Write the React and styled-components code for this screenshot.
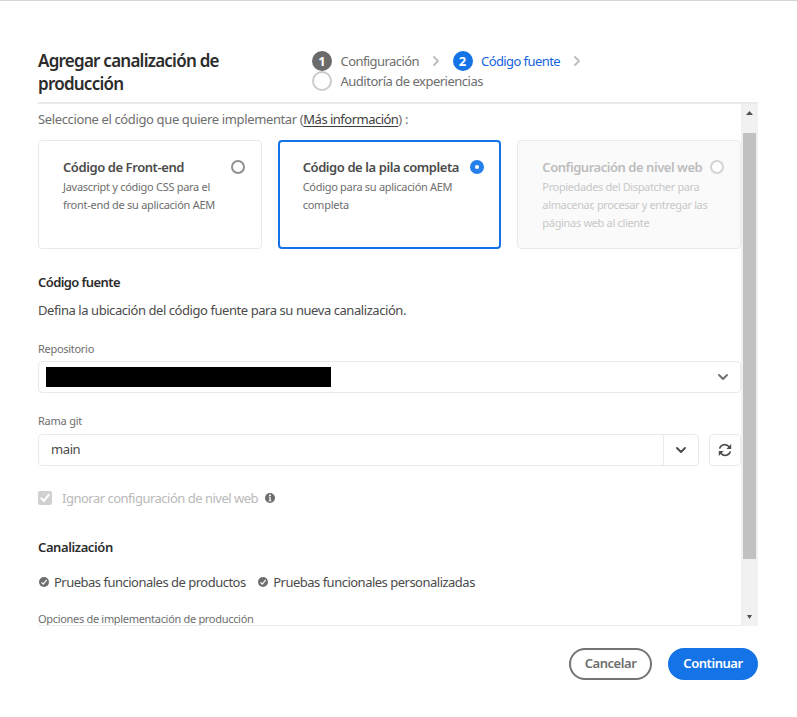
import React from "react";
import styled, { createGlobalStyle } from "styled-components";

const GlobalStyle = createGlobalStyle`
  *, *::before, *::after { box-sizing: border-box; }
  body {
    margin: 0;
    background: #fff;
    color: #4b4b4b;
    font-family: "Noto Sans", "Open Sans", sans-serif;
    font-size: 13px;
  }
  button { font-family: inherit; cursor: pointer; }
`;

const Dialog = styled.main`
  width: 797px;
  height: 717px;
  padding: 0 39px 0 38px;
  border-top: 1px solid #d5d5d5;
  background: #fff;
  display: flex;
  flex-direction: column;
  overflow: hidden;
`;

const Header = styled.header`
  height: 103px;
  flex: none;
  display: flex;
  border-bottom: 2px solid #eaeaea;
`;

const Title = styled.h1`
  width: 274px;
  margin: 0;
  padding: 48px 60px 0 0;
  font-size: 17px;
  font-weight: 600;
  line-height: 23px;
  letter-spacing: -0.76px;
  color: #2c2c2c;
`;

const Steps = styled.ol`
  list-style: none;
  margin: 0;
  padding: 50px 0 0;
  display: flex;
  flex-wrap: wrap;
  align-content: flex-start;
  width: 300px;
`;

const Step = styled.li`
  display: flex;
  align-items: center;
  height: 20px;
  color: ${(p) => (p.$active ? "#1463e0" : "#6e6e6e")};
  letter-spacing: ${(p) => p.$ls}px;
`;

const StepMarker = styled.span`
  width: 20px;
  height: 20px;
  flex: none;
  margin-right: 8.5px;
  border-radius: 50%;
  display: grid;
  place-items: center;
  color: #fff;
  font-size: 13px;
  font-weight: 700;
  line-height: 20px;
  letter-spacing: 0;
  background: ${(p) => (p.$state === "active" ? "#1473e6" : p.$state === "done" ? "#6b6b6b" : "#fff")};
  border: ${(p) => (p.$state === "todo" ? "2px solid #cacaca" : "none")};
`;

const StepArrow = styled.svg`
  width: 8px;
  height: 12px;
  margin: 0 13px 0 12.5px;
`;

const Body = styled.section`
  height: 522px;
  flex: none;
  display: flex;
`;

const Content = styled.div`
  width: 703px;
  overflow: hidden;
  border-bottom: 1px solid #ececec;
`;

const ScrollTrack = styled.div`
  width: 17px;
  display: flex;
  flex-direction: column;
  align-items: center;
  background: #f1f1f1;
`;

const ScrollArrow = styled.svg`
  width: 17px;
  height: 17px;
  flex: none;
`;

const ScrollThumb = styled.div`
  width: 13px;
  height: 426px;
  margin: 12px 0 auto;
  background: #c1c1c1;
`;

const Intro = styled.p`
  margin: 0;
  height: 36px;
  padding-top: 5px;
  line-height: 20px;
  letter-spacing: -0.37px;
  color: #6e6e6e;
  white-space: pre;
`;

const MoreLink = styled.a`
  color: #3f3f3f;
  letter-spacing: -0.515px;
  text-decoration: underline;
  text-underline-offset: 2px;
`;

const Cards = styled.div`
  display: flex;
  gap: 16px;
`;

const Card = styled.label`
  flex: 1 1 0;
  min-width: 0;
  height: 109px;
  display: flex;
  flex-direction: column;
  padding: ${(p) => (p.$selected ? "16px 15px 0 23px" : "17px 16px 0 24px")};
  border: ${(p) => (p.$selected ? "2px solid #1473e6" : "1px solid #eaeaea")};
  border-radius: 4px;
  background: ${(p) => (p.$disabled ? "#fafafa" : "#fff")};
  color: ${(p) => (p.$disabled ? "#c8c8c8" : "#6e6e6e")};
`;

const CardTop = styled.span`
  display: flex;
  align-items: flex-start;
  justify-content: space-between;
  height: 20px;
`;

const CardTitle = styled.strong`
  font-weight: 600;
  line-height: 19px;
  letter-spacing: ${(p) => p.$ls}px;
  color: ${(p) => (p.$disabled ? "#bdbdbd" : "#4b4b4b")};
  white-space: nowrap;
`;

const Radio = styled.span`
  width: 14px;
  height: 14px;
  flex: none;
  margin-top: 2px;
  border-radius: 50%;
  background: #fff;
  border: ${(p) => (p.$selected ? "5px solid #2680eb" : p.$disabled ? "2px solid #d3d3d3" : "2px solid #909090")};
`;

const CardLine = styled.span`
  font-size: 11px;
  line-height: 18px;
  letter-spacing: ${(p) => p.$ls}px;
  white-space: nowrap;
`;

const SectionTitle = styled.h2`
  margin: ${(p) => p.$top}px 0 0;
  font-size: 13px;
  font-weight: 600;
  line-height: 20px;
  letter-spacing: ${(p) => p.$ls}px;
  color: #2c2c2c;
`;

const Paragraph = styled.p`
  margin: 8px 0 0;
  line-height: 20px;
  letter-spacing: -0.435px;
`;

const FieldLabel = styled.div`
  margin-top: ${(p) => p.$top}px;
  height: ${(p) => p.$height || 22}px;
  font-size: 11px;
  line-height: 20px;
  letter-spacing: ${(p) => p.$ls}px;
  color: #6e6e6e;
`;

const Picker = styled.div`
  height: 32px;
  display: flex;
  align-items: center;
  justify-content: space-between;
  padding: 0 11px 0 7px;
  border: 1px solid #eaeaea;
  border-radius: 4px;
`;

const Redacted = styled.span`
  width: 285px;
  height: 20px;
  background: #000;
`;

const BranchRow = styled.div`
  display: flex;
  gap: 10px;
  height: 32px;
`;

const Combo = styled.div`
  flex: 1;
  display: flex;
  border: 1px solid #eaeaea;
  border-radius: 4px;
`;

const ComboValue = styled.span`
  flex: 1;
  padding-left: 12px;
  line-height: 29px;
  letter-spacing: -0.4px;
`;

const ComboButton = styled.button`
  width: 35px;
  padding: 0 1px 0 0;
  border: 0;
  border-left: 1px solid #eaeaea;
  background: transparent;
  display: grid;
  place-items: center;
`;

const RefreshButton = styled.button`
  width: 32px;
  padding: 0;
  border: 1px solid #eaeaea;
  border-radius: 4px;
  background: #fff;
  display: grid;
  place-items: center;
`;

const CheckRow = styled.div`
  display: flex;
  align-items: center;
  height: 20px;
  margin-top: 22px;
  color: #b9b9b9;
  letter-spacing: -0.5px;
`;

const CheckBox = styled.span`
  width: 14px;
  height: 14px;
  margin-right: 10px;
  border-radius: 2px;
  background: #d0d0d0;
  display: grid;
  place-items: center;
`;

const InfoIcon = styled.svg`
  width: 10px;
  height: 10px;
  margin-left: 6.5px;
`;

const Tests = styled.div`
  display: flex;
  gap: 12.5px;
  height: 20px;
  margin-top: 15px;
  padding-left: 1px;
`;

const Test = styled.span`
  display: flex;
  align-items: center;
  gap: 5px;
  letter-spacing: -0.505px;
`;

const Footer = styled.footer`
  display: flex;
  justify-content: flex-end;
  gap: 16px;
  margin-top: 22px;
`;

const ActionButton = styled.button`
  width: ${(p) => (p.$primary ? 90 : 83)}px;
  height: 32px;
  padding: 0 0 2px;
  border-radius: 16px;
  border: 2px solid ${(p) => (p.$primary ? "#1473e6" : "#747474")};
  background: ${(p) => (p.$primary ? "#1473e6" : "#fff")};
  color: ${(p) => (p.$primary ? "#fff" : "#6e6e6e")};
  font-size: 13px;
  font-weight: 600;
  line-height: 18px;
  letter-spacing: -0.45px;
`;

const Arrow = () => (
  <StepArrow viewBox="0 0 8 12">
    <path d="M2 2l4 4-4 4" fill="none" stroke="#bcbcbc" strokeWidth="1.8" strokeLinecap="round" strokeLinejoin="round" />
  </StepArrow>
);

const ChevronDown = ({ color }) => (
  <svg width="12" height="8" viewBox="0 0 12 8">
    <path d="M2 2l4 4 4-4" fill="none" stroke={color} strokeWidth="1.9" strokeLinecap="round" strokeLinejoin="round" />
  </svg>
);

const RefreshIcon = () => (
  <svg width="14" height="14" viewBox="0 0 14 14">
    <g fill="none" stroke="#4b4b4b" strokeWidth="1.6">
      <path d="M1.6 5.6A5.3 5.3 0 0 1 11 3.8" />
      <path d="M12.4 8.4A5.3 5.3 0 0 1 3 10.2" />
    </g>
    <path d="M13.2 1v5H8.4zM.8 13V8h4.8z" fill="#4b4b4b" />
  </svg>
);

const Tick = () => (
  <svg width="10" height="10" viewBox="0 0 10 10">
    <circle cx="5" cy="5" r="5" fill="#6e6e6e" />
    <path d="M2.5 5.3l1.8 1.8 3.4-4.3" fill="none" stroke="#fff" strokeWidth="1.2" />
  </svg>
);

const CARDS = [
  {
    title: ["Código de Front-end", -0.42],
    lines: [["Javascript y código CSS para el", -0.289], ["front-end de su aplicación AEM", -0.269]],
  },
  {
    title: ["Código de la pila completa", -0.42],
    lines: [["Código para su aplicación AEM", -0.3], ["completa", -0.25]],
    selected: true,
  },
  {
    title: ["Configuración de nivel web", -0.46],
    lines: [
      ["Propiedades del Dispatcher para", -0.364],
      ["almacenar, procesar y entregar las", -0.358],
      ["páginas web al cliente", -0.323],
    ],
    disabled: true,
  },
];

export default function App() {
  return (
    <>
      <GlobalStyle />
      <Dialog>
        <Header>
          <Title>Agregar canalización de producción</Title>
          <Steps>
            <Step $ls={-0.567}>
              <StepMarker $state="done">1</StepMarker>
              Configuración
              <Arrow />
            </Step>
            <Step $active $ls={-0.582}>
              <StepMarker $state="active">2</StepMarker>
              Código fuente
              <Arrow />
            </Step>
            <Step $ls={-0.493}>
              <StepMarker $state="todo" />
              Auditoría de experiencias
            </Step>
          </Steps>
        </Header>

        <Body>
          <Content>
            <Intro>
              Seleccione el código que quiere implementar (<MoreLink>Más información</MoreLink>) :
            </Intro>
            <Cards>
              {CARDS.map(({ title, lines, selected, disabled }) => (
                <Card key={title[0]} $selected={selected} $disabled={disabled}>
                  <CardTop>
                    <CardTitle $ls={title[1]} $disabled={disabled}>{title[0]}</CardTitle>
                    <Radio $selected={selected} $disabled={disabled} />
                  </CardTop>
                  {lines.map(([text, ls]) => (
                    <CardLine key={text} $ls={ls}>{text}</CardLine>
                  ))}
                </Card>
              ))}
            </Cards>

            <SectionTitle $top={23} $ls={-0.58}>Código fuente</SectionTitle>
            <Paragraph>Defina la ubicación del código fuente para su nueva canalización.</Paragraph>

            <FieldLabel $top={19} $ls={-0.294}>Repositorio</FieldLabel>
            <Picker>
              <Redacted />
              <ChevronDown color="#6e6e6e" />
            </Picker>

            <FieldLabel $top={18} $height={23} $ls={-0.238}>Rama git</FieldLabel>
            <BranchRow>
              <Combo>
                <ComboValue>main</ComboValue>
                <ComboButton aria-label="Abrir lista">
                  <ChevronDown color="#4b4b4b" />
                </ComboButton>
              </Combo>
              <RefreshButton aria-label="Actualizar">
                <RefreshIcon />
              </RefreshButton>
            </BranchRow>

            <CheckRow>
              <CheckBox>
                <svg width="10" height="10" viewBox="0 0 10 10">
                  <path d="M1.3 5.3l2.6 2.6 4.8-6" fill="none" stroke="#fff" strokeWidth="2" strokeLinecap="round" />
                </svg>
              </CheckBox>
              Ignorar configuración de nivel web
              <InfoIcon viewBox="0 0 10 10">
                <circle cx="5" cy="5" r="5" fill="#6e6e6e" />
                <circle cx="5" cy="2.5" r="1" fill="#fff" />
                <path d="M3.8 4.2h1.9v3.2h.7v.9H3.7v-.9h.7V5.1h-.6z" fill="#fff" />
              </InfoIcon>
            </CheckRow>

            <SectionTitle $top={29} $ls={-0.4}>Canalización</SectionTitle>
            <Tests>
              <Test><Tick />Pruebas funcionales de productos</Test>
              <Test><Tick />Pruebas funcionales personalizadas</Test>
            </Tests>
            <FieldLabel $top={17} $ls={-0.31}>Opciones de implementación de producción</FieldLabel>
          </Content>
          <ScrollTrack>
            <ScrollArrow viewBox="0 0 17 17">
              <path d="M5 11h7L8.5 7z" fill="#505050" />
            </ScrollArrow>
            <ScrollThumb />
            <ScrollArrow viewBox="0 0 17 17">
              <path d="M6 6h5L8.5 10z" fill="#505050" />
            </ScrollArrow>
          </ScrollTrack>
        </Body>

        <Footer>
          <ActionButton>Cancelar</ActionButton>
          <ActionButton $primary>Continuar</ActionButton>
        </Footer>
      </Dialog>
    </>
  );
}
